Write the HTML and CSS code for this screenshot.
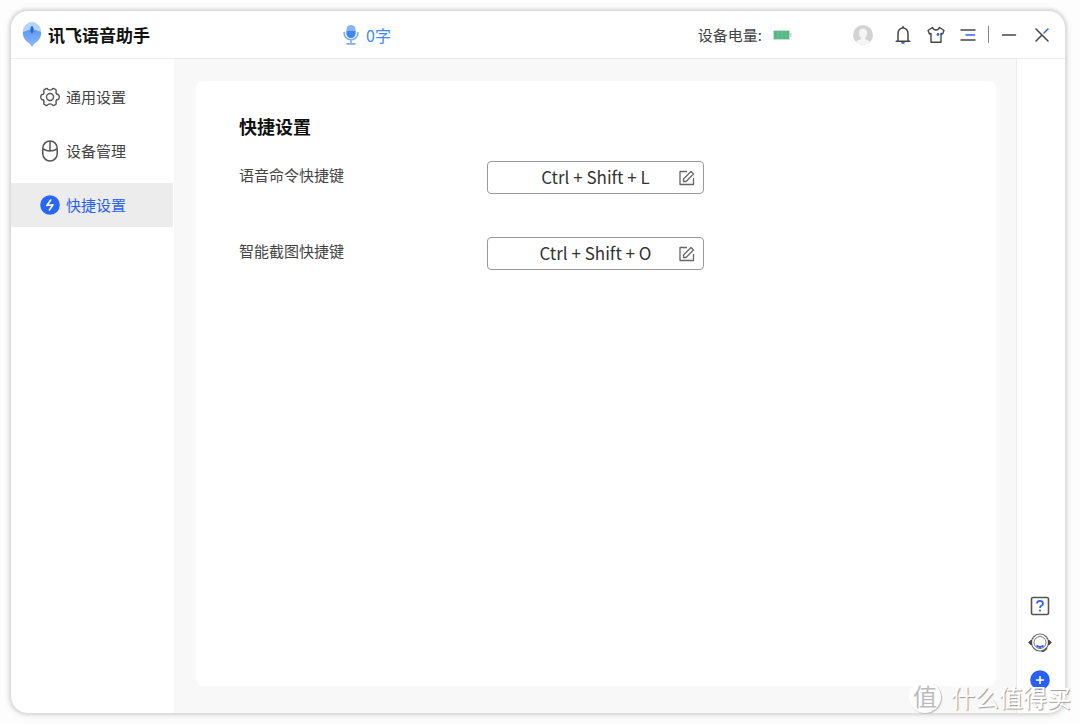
FILE: index.html
```html
<!DOCTYPE html>
<html lang="zh-CN">
<head>
<meta charset="utf-8">
<meta name="viewport" content="width=device-width, initial-scale=1">
<title>讯飞语音助手</title>
<link rel="stylesheet" href="styles.css">
</head>
<body>
<div class="window">
  <header class="titlebar">
    <div class="brand">
      <svg width="20" height="28" viewBox="0 0 20 28" aria-hidden="true">
        <defs><linearGradient id="drop" x1="0" y1="0" x2="0" y2="1"><stop offset="0" stop-color="#5c96f0"/><stop offset="1" stop-color="#8bbcff"/></linearGradient></defs>
        <circle cx="10" cy="10" r="9" fill="#b4d3fc"/>
        <path d="M.8 11L8.500 8.500H11.500L19.200 11C19.200 17 16.500 20 12.500 22.500L10 26L7.500 22.500C3.500 20 .8 17 .8 11Z" fill="url(#drop)"/>
        <path d="M10 5C11 5 11.500 7 11.700 9Q11.700 12 10 12.500Q8.300 12 8.300 9C8.500 7 9 5 10 5Z" fill="#2869cf"/>
      </svg>
      <h1 class="brand-name">讯飞语音助手</h1>
    </div>
    <div class="count">
      <svg width="16" height="22" viewBox="0 0 16 22" aria-hidden="true">
        <rect x="3.500" y="1" width="9" height="13" rx="4.500" fill="#82b4fb"/>
        <path d="M3.500 7H12.500V9.500A4.500 4.500 0 0 1 3.500 9.500Z" fill="#3f85f5"/>
        <path d="M1.200 8.500V9.500A6.800 6.300 0 0 0 14.800 9.500V8.500M8 16V19.500M4 19.800H12" fill="none" stroke="#7caef7" stroke-width="1.700" stroke-linecap="round"/>
      </svg>
      <span>0字</span>
    </div>
    <div class="battery">
      <span>设备电量:</span>
      <svg width="19" height="12" viewBox="0 0 19 12" aria-hidden="true">
        <rect x="0.500" y="1.500" width="16" height="9" rx="1" fill="#58b885" stroke="#c9dcd3"/>
        <path d="M5 2V10M9 2V10M13 2V10" stroke="#6bc394"/>
        <path d="M17.500 4V8" stroke="#c9d3d1" stroke-width="2"/>
      </svg>
    </div>
    <div class="tools">
      <button class="icon-button avatar" aria-label="账户">
        <svg width="20" height="20" viewBox="0 0 20 20"><defs><clipPath id="face"><circle cx="10" cy="10" r="10"/></clipPath></defs><g clip-path="url(#face)"><path d="M0 0H20V20H0Z" fill="#d3d3d3"/><path d="M10 3.500C12.500 3.500 14 5.200 14 7.800C14 10 13.200 11.800 12 12.800V14L17 16.500V20H3V16.500L8 14V12.800C6.800 11.800 6 10 6 7.800C6 5.200 7.500 3.500 10 3.500Z" fill="#f5f5f7"/></g></svg>
      </button>
      <button class="icon-button" aria-label="通知">
        <svg width="18" height="20" viewBox="0 0 18 20" fill="none" stroke="#454545" stroke-width="1.500" stroke-linecap="round"><path d="M9 1.500V3M4 16V8.500A5 5.500 0 0 1 14 8.500V16M2.200 16.200H15.800"/><path d="M7 16.900H11Q10.500 19 9 19T7 16.900Z" fill="#2e63ff" stroke="none"/></svg>
      </button>
      <button class="icon-button" aria-label="皮肤">
        <svg width="18" height="20" viewBox="0 0 18 20" fill="none" stroke="#454545" stroke-width="1.400" stroke-linejoin="round"><path d="M5.500 2.500L1 5.500L2.500 9L4 8.500V17.300H14V8.500L15.500 9L17 5.500L12.500 2.500Q11.500 5 9 5T5.500 2.500Z"/><circle cx="11" cy="9.500" r="1.400" fill="#2e63ff" stroke="none"/></svg>
      </button>
      <button class="icon-button" aria-label="菜单">
        <svg width="16" height="20" viewBox="0 0 16 20" stroke="#454545" stroke-width="1.500" stroke-linecap="round"><path d="M1 5H15M1 15H15"/><path d="M6 10H14.500" stroke="#2e63ff"/></svg>
      </button>
      <span class="divider"></span>
      <button class="icon-button" aria-label="最小化">
        <svg width="16" height="20" viewBox="0 0 16 20" stroke="#454545" stroke-width="1.500" stroke-linecap="round"><path d="M1.500 10H14.500"/></svg>
      </button>
      <button class="icon-button close" aria-label="关闭">
        <svg width="16" height="20" viewBox="0 0 16 20" stroke="#454545" stroke-width="1.500" stroke-linecap="round"><path d="M2 4L14 16M2 16L8 10"/><path d="M10 8L14 4" stroke="#2e63ff"/></svg>
      </button>
    </div>
  </header>
  <div class="body">
    <nav class="sidebar">
      <a class="nav-item" href="#general">
        <svg width="20" height="22" viewBox="0 0 20 22" fill="none" stroke="#555" stroke-width="1.400" stroke-linejoin="round"><path d="M6 2.500Q7.500 2.300 8 3.500Q10 4.700 12 3.500Q12.500 2.300 14 2.500L16 3.800Q16.500 5 16 6Q16 8.500 18 8.500Q19.300 9 19.300 11T18 13.500Q16 13.500 16 16Q16.500 17 16 18.200L14 19.500Q12.500 19.700 12 18.500Q10 17.300 8 18.500Q7.500 19.700 6 19.500L4 18.200Q3.500 17 4 16Q4 13.500 2 13.500Q.7 13 .7 11T2 8.500Q4 8.500 4 6Q3.500 5 4 3.800Z"/><circle cx="10" cy="11" r="3.500"/></svg>
        <span>通用设置</span>
      </a>
      <a class="nav-item" href="#devices">
        <svg width="20" height="22" viewBox="0 0 20 22" fill="none" stroke="#555" stroke-width="1.500"><rect x="2.800" y="1" width="14.400" height="20" rx="7.200"/><path d="M3 9Q10 13 17 9M10 1V10.800"/></svg>
        <span>设备管理</span>
      </a>
      <a class="nav-item active" href="#shortcuts" aria-current="page">
        <svg width="20" height="22" viewBox="0 0 20 22"><circle cx="10" cy="11" r="9.800" fill="#2867f5"/><path d="M10.700 6L6.800 11.500L13 10.700L9.400 16" fill="none" stroke="#fff" stroke-width="1.600" stroke-linecap="round" stroke-linejoin="round"/></svg>
        <span>快捷设置</span>
      </a>
    </nav>
    <main class="content">
      <section class="card">
        <h2 class="card-title">快捷设置</h2>
        <div class="field">
          <label class="field-label" for="voice">语音命令快捷键</label>
          <div class="shortcut">
            <input class="shortcut-input" id="voice" type="text" value="Ctrl + Shift + L" readonly>
            <button class="icon-button" aria-label="编辑语音命令快捷键"><svg width="16" height="16" viewBox="0 0 16 16" fill="none" stroke="#666" stroke-width="1.300" stroke-linejoin="round"><path d="M8 1.500H1V14.500H14.500V8"/><path d="M4.500 11.500V9L12 1.500L14.500 4L7 11.500Z"/></svg></button>
          </div>
        </div>
        <div class="field">
          <label class="field-label" for="capture">智能截图快捷键</label>
          <div class="shortcut">
            <input class="shortcut-input" id="capture" type="text" value="Ctrl + Shift + O" readonly>
            <button class="icon-button" aria-label="编辑智能截图快捷键"><svg width="16" height="16" viewBox="0 0 16 16" fill="none" stroke="#666" stroke-width="1.300" stroke-linejoin="round"><path d="M8 1.500H1V14.500H14.500V8"/><path d="M4.500 11.500V9L12 1.500L14.500 4L7 11.500Z"/></svg></button>
          </div>
        </div>
      </section>
    </main>
    <aside class="rail">
      <button class="icon-button" aria-label="帮助"><svg width="20" height="20" viewBox="0 0 20 20" fill="none"><rect x="1.500" y="1.500" width="17" height="17" rx="1.500" stroke="#555" stroke-width="1.600"/><path d="M7 7.500Q7 4.800 10 4.800T13 7.400Q13 8.800 11.300 9.700Q10 10.400 10 12" stroke="#2e63ff" stroke-width="1.800"/><circle cx="10" cy="14.600" r="1.100" fill="#2e63ff"/></svg></button>
      <button class="icon-button" aria-label="客服"><svg width="24" height="20" viewBox="0 0 24 20" fill="none"><circle cx="12" cy="9.500" r="8.500" stroke="#666" stroke-width="1.200"/><circle cx="12" cy="9.500" r="6" stroke="#777"/><path d="M3.300 7V12L.8 9.500ZM20.700 7V12L23.200 9.500Z" fill="#444" stroke="#444"/><path d="M8.500 12.500Q12 15.500 15.500 12.500" stroke="#2e63ff" stroke-width="1.800"/><path d="M19 15Q17 18.500 13.500 18.700" stroke="#555" stroke-width="1.200"/></svg></button>
      <button class="icon-button" aria-label="添加"><svg width="20" height="20" viewBox="0 0 20 20"><circle cx="10" cy="10" r="9.800" fill="#285ff5"/><path d="M10 6V14M6 10H14" stroke="#fff" stroke-width="1.600"/></svg></button>
    </aside>
  </div>
</div>
<div class="watermark"><span class="watermark-seal">值</span><span>什么值得买</span></div>
</body>
</html>
```
FILE: styles.css
```css
* {
  box-sizing: border-box;
}

body {
  margin: 0;
  min-height: 100vh;
  display: flex;
  padding: 10px 14px 10px 10px;
  background: #fdfdfd;
  color: #444;
  font: 15px/22px "Noto Sans CJK SC", "Noto Sans", sans-serif;
}

h1,
h2 {
  margin: 0;
}

.window {
  flex: 1;
  display: flex;
  flex-direction: column;
  overflow: hidden;
  background: #fff;
  border: 1px solid #ddd;
  border-radius: 18px;
  box-shadow: 0 0 3px 1px #d8d8d8, 0 1px 8px #e8e8e8;
}

.titlebar {
  display: flex;
  align-items: center;
  height: 48px;
  padding: 0 15px 0 11px;
  border-bottom: 1px solid #ececec;
}

.brand {
  display: flex;
  align-items: center;
  gap: 6px;
  flex: 0 0 321px;
}

.brand-name {
  color: #111;
  font-size: 17px;
  line-height: 24px;
  font-weight: 700;
}

.count {
  display: flex;
  align-items: center;
  gap: 7px;
  color: #4289f4;
  font-size: 16px;
  line-height: 20px;
}

.battery {
  display: flex;
  align-items: center;
  gap: 11px;
  margin-left: auto;
}

.tools {
  display: flex;
  align-items: center;
  gap: 15px;
  margin-left: 61px;
}

.icon-button {
  display: flex;
  padding: 0;
  border: 0;
  background: none;
  cursor: pointer;
}

.avatar {
  margin-right: 6px;
}

.divider {
  width: 1px;
  height: 17px;
  margin: 0 -3px;
  background: #888;
}

.close {
  margin-left: 2px;
}

.body {
  flex: 1;
  display: flex;
}

.sidebar {
  flex: 0 0 163px;
  display: flex;
  flex-direction: column;
  gap: 10px;
  padding: 16px 1px 0 0;
}

.nav-item {
  display: flex;
  align-items: center;
  gap: 6px;
  height: 44px;
  padding-left: 29px;
  color: #444;
  text-decoration: none;
}

.nav-item.active {
  background: #ececec;
  color: #285ff5;
}

.content {
  flex: 1;
  display: flex;
  padding: 22px 20px 27px 22px;
  background: #f8f8f8;
}

.card {
  flex: 1;
  padding: 33px 43px;
  border-radius: 8px;
  background: #fff;
}

.card-title {
  margin-bottom: 23px;
  color: #111;
  font-size: 18px;
  line-height: 24px;
}

.field {
  display: flex;
  align-items: flex-start;
  margin-bottom: 43px;
}

.field-label {
  flex: 0 0 248px;
  line-height: 28px;
}

.shortcut {
  display: flex;
  align-items: center;
  width: 217px;
  height: 33px;
  padding: 0 8px 0 24px;
  border: 1px solid #999;
  border-radius: 4px;
}

.shortcut-input {
  flex: 1;
  min-width: 0;
  padding: 0 0 2px;
  border: 0;
  outline: 0;
  background: none;
  color: #333;
  font: 17px/24px "Noto Sans CJK SC", "Noto Sans", sans-serif;
  text-align: center;
}

.rail {
  flex: 0 0 49px;
  display: flex;
  flex-direction: column;
  align-items: center;
  justify-content: flex-end;
  gap: 17px;
  padding: 0 3px 23px 0;
  border-left: 1px solid #ececec;
}

.watermark {
  position: absolute;
  right: 9px;
  bottom: 10px;
  display: flex;
  align-items: center;
  gap: 10px;
  color: #fff;
  font-size: 24px;
  line-height: 34px;
  text-shadow: 1px 1px 1px #999;
  pointer-events: none;
}

.watermark-seal {
  width: 32px;
  height: 32px;
  border-radius: 50%;
  background: #fff;
  box-shadow: 1px 1px 1px #bbb;
  color: #bbb;
  line-height: 30px;
  text-align: center;
  text-shadow: none;
}
```
